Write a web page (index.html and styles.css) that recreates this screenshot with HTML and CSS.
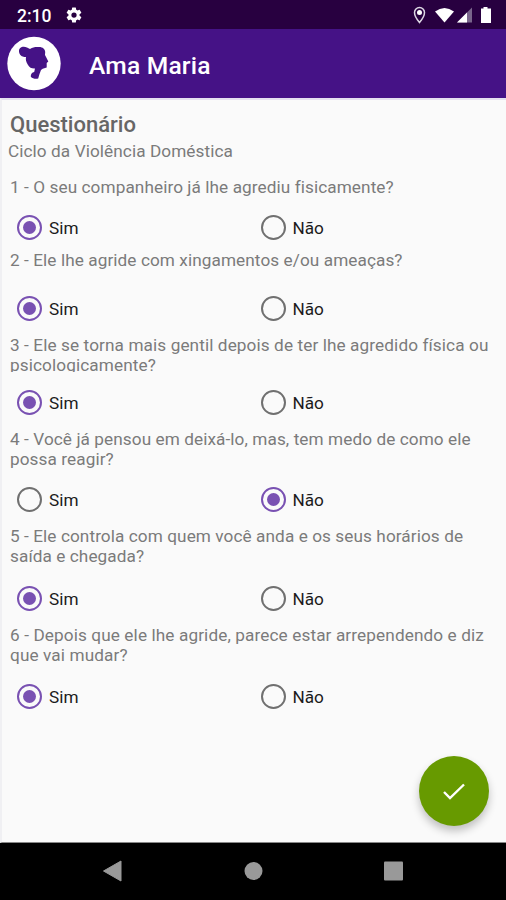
FILE: index.html
```html
<!DOCTYPE html>
<html lang="pt-BR">
<head>
<meta charset="utf-8">
<title>Ama Maria</title>
<link rel="stylesheet" href="styles.css">
</head>
<body>
<div class="status">
  <span class="clock">2:10</span>
  <svg class="gear" width="18" height="18" viewBox="0 0 24 24"><path fill="#fff" fill-rule="evenodd" d="M19.4 13a7.800 7.800 0 0 0 0-2l2.200-1.700a.5.5 0 0 0 .1-.6l-2-3.500a.5.5 0 0 0-.6-.2l-2.500 1a8 8 0 0 0-1.700-1l-.4-2.600a.5.5 0 0 0-.5-.4h-4a.5.5 0 0 0-.5.4l-.4 2.600a8 8 0 0 0-1.700 1l-2.500-1a.5.5 0 0 0-.6.2l-2 3.500a.5.5 0 0 0 .1.6L4.600 11a8 8 0 0 0 0 2l-2.200 1.700a.5.500 0 0 0-.1.600l2 3.500c.1.200.4.300.6.200l2.500-1a8 8 0 0 0 1.700 1l.4 2.600c0 .2.2.4.5.4h4c.3 0 .5-.2.5-.4l.4-2.600a8 8 0 0 0 1.700-1l2.500 1c.2.100.5 0 .6-.2l2-3.500a.5.500 0 0 0-.1-.6zM12 15.500a3.500 3.500 0 1 1 0-7 3.500 3.500 0 0 1 0 7z"/></svg>
  <svg class="indicators" width="80" height="20" viewBox="0 0 80 20">
    <path d="M6.500 17.500C3.500 14 1.500 11 1.500 7.500a5 5 0 0 1 10 0c0 3.500-2 6.500-5 10z" fill="none" stroke="#ddd7e4" stroke-width="1.500"/>
    <circle cx="6.500" cy="7.500" r="2.500" fill="#fff"/>
    <path d="M22 6.500q9.500-7 19 0L31.500 17.500z" fill="#fff"/>
    <path d="M59 2.500v15H44z" fill="#79658b"/><path d="M54 7.500v10H44z" fill="#fff"/>
    <path d="M68 3.500h2.500V2h4v1.500H78v14.500H68z" fill="#fff"/>
  </svg>
</div>
<header class="appbar">
  <svg class="logo" width="54" height="54" viewBox="0 0 54 54">
    <circle cx="27" cy="26.500" r="26.700" fill="#fff"/>
    <path fill="#451286" d="M12 14.500c-.5-4.500 4.500-6 8-4l3 1.500c3-2 5.500-2.200 9-2 4 .1 6 2 6.200 5l-.2 3 1.300 2.500 2 4-1.600 1.500v4.500l-4 1.200-1.700 1.300-1.500 4-1.300 4.500c-2.500.8-5.500.2-7.400-1.700-.2-2.800 1.200-4.300 3.400-4.800l.8-3.500c-3.500.2-5.500-1-7-3.500-2-3-2.500-5.500-2-8-4 .2-6.700-2-7-5.500z"/>
  </svg>
  <h1>Ama Maria</h1>
</header>
<main class="page">
  <h2>Questionário</h2>
  <p class="subtitle">Ciclo da Violência Doméstica</p>

  <section class="question q1">
    <p>1 - O seu companheiro já lhe agrediu fisicamente?</p>
    <div class="options"><span class="option"><i class="radio on"></i>Sim</span><span class="option"><i class="radio"></i>Não</span></div>
  </section>
  <section class="question q2">
    <p>2 - Ele lhe agride com xingamentos e/ou ameaças?</p>
    <div class="options"><span class="option"><i class="radio on"></i>Sim</span><span class="option"><i class="radio"></i>Não</span></div>
  </section>
  <section class="question q3">
    <p><span class="clipped">3 - Ele se torna mais gentil depois de ter lhe agredido física ou<br>psicologicamente?</span></p>
    <div class="options"><span class="option"><i class="radio on"></i>Sim</span><span class="option"><i class="radio"></i>Não</span></div>
  </section>
  <section class="question q4">
    <p>4 - Você já pensou em deixá-lo, mas, tem medo de como ele<br>possa reagir?</p>
    <div class="options"><span class="option"><i class="radio"></i>Sim</span><span class="option"><i class="radio on"></i>Não</span></div>
  </section>
  <section class="question q5">
    <p>5 - Ele controla com quem você anda e os seus horários de<br>saída e chegada?</p>
    <div class="options"><span class="option"><i class="radio on"></i>Sim</span><span class="option"><i class="radio"></i>Não</span></div>
  </section>
  <section class="question q6">
    <p>6 - Depois que ele lhe agride, parece estar arrependendo e diz<br>que vai mudar?</p>
    <div class="options"><span class="option"><i class="radio on"></i>Sim</span><span class="option"><i class="radio"></i>Não</span></div>
  </section>

  <button class="fab" aria-label="Confirmar">
    <svg width="30" height="30" viewBox="0 0 30 30"><path d="M5 16l6 6L25 8.500" fill="none" stroke="#fff" stroke-width="2.400"/></svg>
  </button>
</main>
<nav class="navbar">
  <svg width="20" height="22" viewBox="0 0 20 22"><path d="M1.500 11L19 1v20z" fill="#999" stroke="#999" stroke-linejoin="round"/></svg>
  <svg width="20" height="20" viewBox="0 0 20 20"><circle cx="10.500" cy="10" r="9" fill="#999"/></svg>
  <svg width="20" height="20" viewBox="0 0 20 20"><rect x="0" y=".5" width="19" height="19" rx="1" fill="#999"/></svg>
</nav>
</body>
</html>
```
FILE: styles.css
```css
* { box-sizing: border-box; }
body {
  margin: 0;
  width: 506px;
  height: 900px;
  display: flex;
  flex-direction: column;
  overflow: hidden;
  font-family: Roboto, sans-serif;
  background: #fafafa;
}
h1, h2, p { margin: 0; }
svg { display: block; }

.status {
  height: 29px;
  flex: none;
  display: flex;
  align-items: center;
  padding: 0 13px 0 17px;
  background: #280040;
  color: #fff;
}
.clock { width: 48px; font-size: 17.5px; font-weight: 500; line-height: 20px; padding-top: 2px; }
.gear { margin-top: 1px; }
.indicators { margin-left: auto; }

.appbar {
  height: 69px;
  flex: none;
  display: flex;
  align-items: center;
  padding-left: 7px;
  background: #451286;
  color: #fff;
}
.logo { margin-right: 28px; overflow: visible; }
.appbar h1 { font-size: 24.6px; font-weight: 500; line-height: 30px; padding-top: 4px; letter-spacing: .2px; }

.page {
  position: relative;
  height: 745px;
  flex: none;
  padding: 12px 0 0 8px;
  border-top: 2px solid #e4e1f0;
  border-left: 2px solid #f0f0f3;
  border-bottom: 1px solid #888;
  color: #7b7b7b;
}
.page h2 { font-size: 22px; font-weight: 500; line-height: 26px; color: #666; }
.subtitle { margin: 3px 0 16px -2px; font-size: 17.2px; line-height: 20px; letter-spacing: .08px; }

.question p { font-size: 17.2px; line-height: 20px; white-space: nowrap; letter-spacing: .08px; }
.q1 p { height: 38px; }
.q2 p { height: 46px; }
.q3 p { height: 55px; }
.q4 p { height: 58px; }
.q5 p { height: 60px; }
.q6 p { height: 59px; letter-spacing: .11px; }
.q1 { margin-bottom: 11px; }
.q2, .q3, .q4, .q5 { margin-bottom: 15px; }
.q3 p { letter-spacing: .1px; }
.clipped { display: block; height: 37px; overflow: hidden; }

.options { display: grid; grid-template-columns: 243.5px 1fr; height: 24px; padding-left: 7px; }
.option { display: flex; align-items: center; gap: 7px; font-size: 17.2px; line-height: 24px; color: #1c1c1c; }
.radio {
  width: 25px;
  height: 25px;
  border: 2px solid #707070;
  border-radius: 50%;
  display: grid;
  place-items: center;
}
.radio.on { border-color: #7951b2; }
.radio.on::after { content: ""; width: 13px; height: 13px; border-radius: 50%; background: #7951b2; }

.fab {
  position: absolute;
  right: 17px;
  bottom: 16px;
  width: 70px;
  height: 70px;
  padding: 0;
  border: 0;
  border-radius: 50%;
  background: #679a00;
  display: grid;
  place-items: center;
  box-shadow: 0 5px 9px rgba(0, 0, 0, .24);
}

.navbar {
  flex: 1;
  display: flex;
  align-items: center;
  justify-content: space-between;
  padding: 0 102px 2px 102px;
  background: #000;
}
```
